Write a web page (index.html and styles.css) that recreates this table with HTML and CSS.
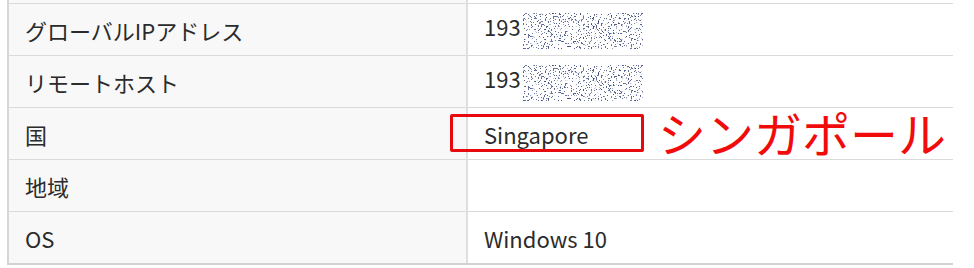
FILE: index.html
```html
<!DOCTYPE html>
<html lang="ja">
<head>
    <meta charset="UTF-8">
    <meta name="viewport" content="width=device-width, initial-scale=1.0">
    <title>アクセス情報</title>
    <link rel="stylesheet" href="styles.css">
</head>
<body>
    <table class="info">
        <tr class="cut">
            <th></th>
            <td></td>
        </tr>
        <tr>
            <th>グローバルIPアドレス</th>
            <td>193<span class="masked"><svg width="120" height="36" viewBox="0 0 120 36"><filter id="noise" x="0" y="0" width="100%" height="100%"><feTurbulence type="fractalNoise" baseFrequency="0.6" numOctaves="3" seed="7"/><feColorMatrix type="matrix" values="0.1 0.3 0 0 -0.1  0 0.3 0.1 0 -0.05  0 0.2 0.5 0 -0.05  24 0 0 0 -14.6"/></filter><rect width="120" height="36" filter="url(#noise)"/></svg></span></td>
        </tr>
        <tr>
            <th>リモートホスト</th>
            <td>193<span class="masked"><svg width="120" height="36" viewBox="0 0 120 36"><rect width="120" height="36" filter="url(#noise)"/></svg></span></td>
        </tr>
        <tr>
            <th>国</th>
            <td class="marked">
                Singapore
                <span class="mark-box"></span>
                <span class="mark-note">シンガポール</span>
            </td>
        </tr>
        <tr>
            <th>地域</th>
            <td></td>
        </tr>
        <tr>
            <th>OS</th>
            <td>Windows 10</td>
        </tr>
    </table>
</body>
</html>
```

FILE: styles.css
```css
body {
    margin: 0;
    background-color: #fff;
    font-family: "Noto Sans CJK JP", "Noto Sans", sans-serif;
    color: #2b2b2b;
}

.info {
    margin-left: 7px;
    width: 946px;
    border-collapse: collapse;
    font-size: 22px;
}

.info th,
.info td {
    height: 51px;
    padding: 0 16px;
    border-top: 1px solid #dadada;
    border-bottom: 1px solid #dadada;
    text-align: left;
    vertical-align: middle;
    font-weight: normal;
}

.info th {
    width: 425px;
    background-color: #f8f8f8;
    border-left: 2px solid #d6d6d6;
    border-right: 2px solid #dedede;
}

.info tr:last-child th,
.info tr:last-child td {
    border-bottom: 2px solid #d2d2d2;
}

.info .cut th,
.info .cut td {
    height: 3px;
    padding: 0;
    border-top: none;
}

.masked {
    display: inline-block;
    vertical-align: middle;
    margin-left: 2px;
}

.masked svg {
    display: block;
}

.marked {
    position: relative;
}

/* annotation drawn over the country cell */
.mark-box {
    position: absolute;
    left: -18px;
    top: 6px;
    width: 188px;
    height: 32px;
    border: 3px solid #e8090e;
    border-radius: 2px;
}

.mark-note {
    position: absolute;
    left: 190px;
    top: -6px;
    font-size: 48px;
    line-height: 60px;
    color: #f10b0b;
    white-space: nowrap;
}
```
